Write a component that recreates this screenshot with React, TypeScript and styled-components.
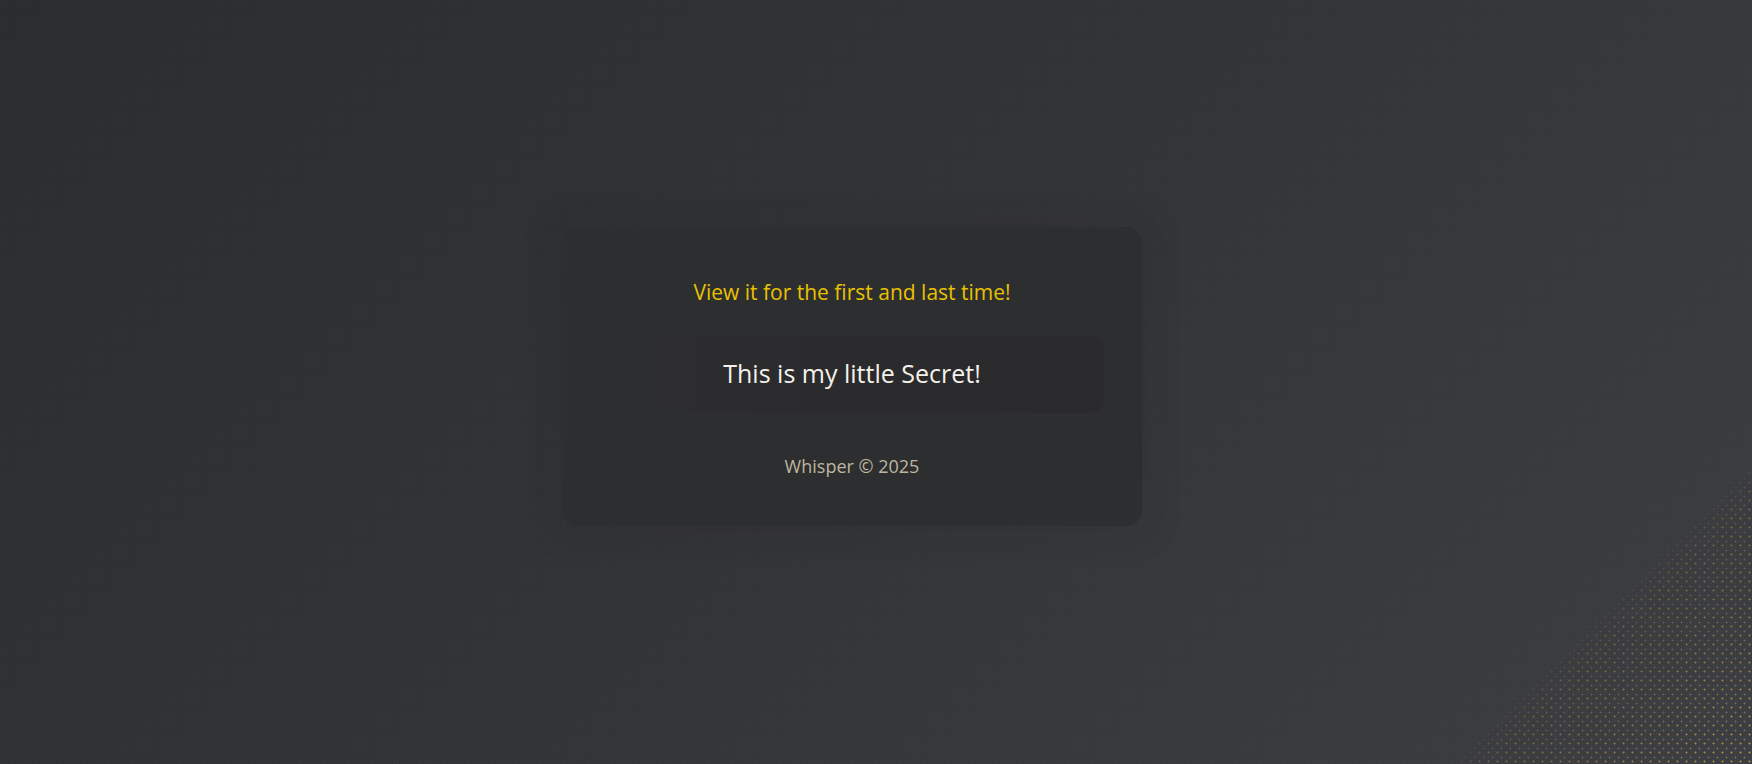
import React from "react";
import styled, { createGlobalStyle } from "styled-components";

const GlobalStyle = createGlobalStyle`
  * {
    margin: 0;
    padding: 0;
    box-sizing: border-box;
  }
  html, body, #root {
    height: 100%;
  }
  body {
    font-family: "Open Sans", "Noto Sans", sans-serif;
    background: #2f3032;
    overflow: hidden;
  }
`;

const Page = styled.main`
  position: relative;
  display: flex;
  align-items: center;
  justify-content: center;
  height: 100vh;
  padding: 0 48px 11px 0;
  background:
    radial-gradient(circle, rgba(255, 255, 255, 0.025) 0.6px, transparent 0.9px) 0 0 / 3px 3px,
    linear-gradient(135deg, #2b2c2e 0%, #333436 50%, #3d3e41 100%);
  overflow: hidden;
`;

const Dots = styled.div`
  position: absolute;
  right: 0;
  bottom: 0;
  width: 340px;
  height: 340px;
  pointer-events: none;
  background:
    radial-gradient(circle, rgba(200, 170, 60, 0.85) 0.8px, transparent 1.2px) 0 0 / 9px 9px,
    radial-gradient(circle, rgba(150, 145, 120, 0.65) 0.8px, transparent 1.2px) 4px 5px / 9px 9px;
  -webkit-mask-image: linear-gradient(135deg, transparent 55%, rgba(0, 0, 0, 0.45) 60%, #000 100%);
  mask-image: linear-gradient(135deg, transparent 55%, rgba(0, 0, 0, 0.45) 60%, #000 100%);
`;

const Card = styled.section`
  width: 580px;
  display: flex;
  flex-direction: column;
  align-items: center;
  padding: 49px 38px 47px;
  background: #2d2e30;
  border-radius: 16px;
  box-shadow:
    0 0 0 36px rgba(30, 30, 32, 0.035),
    0 0 40px rgba(0, 0, 0, 0.05);
`;

const Notice = styled.p`
  font-size: 21px;
  line-height: 32px;
  color: #e8c100;
  text-align: center;
`;

const SecretBox = styled.div`
  width: 100%;
  height: 77px;
  margin-top: 28px;
  padding-bottom: 4px;
  display: flex;
  align-items: center;
  justify-content: center;
  background: linear-gradient(90deg, #2d2e30 0%, #2b2b2d 45%, #2a2a2c 100%);
  border-radius: 12px;
  font-size: 25px;
  color: #f4f1ea;
`;

const Footer = styled.footer`
  margin-top: 40px;
  font-size: 18px;
  line-height: 26px;
  color: #bdb69f;
`;

export default function App() {
  return (
    <>
      <GlobalStyle />
      <Page>
        <Card>
          <Notice>View it for the first and last time!</Notice>
          <SecretBox>This is my little Secret!</SecretBox>
          <Footer>Whisper © 2025</Footer>
        </Card>
        <Dots />
      </Page>
    </>
  );
}
